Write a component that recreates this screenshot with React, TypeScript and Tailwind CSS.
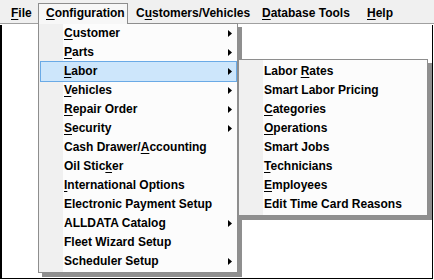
type MenuItem = { label: string; u?: number; sub?: boolean; active?: boolean }

const configItems: MenuItem[] = [
  { label: "Customer", u: 0, sub: true },
  { label: "Parts", u: 0, sub: true },
  { label: "Labor", u: 0, sub: true, active: true },
  { label: "Vehicles", u: 0, sub: true },
  { label: "Repair Order", u: 0, sub: true },
  { label: "Security", u: 0, sub: true },
  { label: "Cash Drawer/Accounting", u: 12 },
  { label: "Oil Sticker", u: 8 },
  { label: "International Options", u: 0 },
  { label: "Electronic Payment Setup" },
  { label: "ALLDATA Catalog", sub: true },
  { label: "Fleet Wizard Setup" },
  { label: "Scheduler Setup", sub: true },
]

const laborItems: MenuItem[] = [
  { label: "Labor Rates", u: 6 },
  { label: "Smart Labor Pricing" },
  { label: "Categories", u: 0 },
  { label: "Operations", u: 0 },
  { label: "Smart Jobs" },
  { label: "Technicians", u: 0 },
  { label: "Employees", u: 0 },
  { label: "Edit Time Card Reasons" },
]

function Mnemonic({ text, u }: { text: string; u?: number }) {
  if (u === undefined) return <>{text}</>
  return (
    <>
      {text.slice(0, u)}
      <span className="underline decoration-1 underline-offset-[2px]">{text[u]}</span>
      {text.slice(u + 1)}
    </>
  )
}

function Arrow() {
  return (
    <svg width="4" height="7" viewBox="0 0 4 7" className="shrink-0">
      <path d="M0 0L4 3.5L0 7Z" fill="#000" />
    </svg>
  )
}

function Row({ item }: { item: MenuItem }) {
  if (item.active) {
    return (
      <div className="-my-px ml-[1px] flex h-[21px] items-center justify-between border border-[#6aaae6] bg-[#cde6fb] pl-[23px] pr-[4px] leading-[19px]">
        <span className="whitespace-nowrap">
          <Mnemonic text={item.label} u={item.u} />
        </span>
        {item.sub ? <Arrow /> : null}
      </div>
    )
  }
  return (
    <div className="flex h-[19px] items-center justify-between pl-[25px] pr-[5px] leading-[19px]">
      <span className="whitespace-nowrap">
        <Mnemonic text={item.label} u={item.u} />
      </span>
      {item.sub ? <Arrow /> : null}
    </div>
  )
}

export default function App() {
  return (
    <div className="relative h-[280px] w-[434px] overflow-hidden bg-white font-['Liberation_Sans',Arial,sans-serif] text-[12px] font-bold text-black">
      {/* menu bar */}
      <div className="flex h-[24px] items-start border-b border-[#a0a0a0] bg-[#f0f0f0]">
        <div className="mt-[3px] w-[38px] pl-[11px] leading-[20px]">
          <Mnemonic text="File" u={0} />
        </div>
        <div className="relative z-20 mt-[3px] h-[21px] w-[90px] border-x border-t border-[#8e8e8e] bg-[#f7f7f7] pl-[7px] leading-[18px]">
          <Mnemonic text="Configuration" u={0} />
        </div>
        <div className="mt-[3px] w-[126px] whitespace-nowrap pl-[8px] leading-[20px]">
          <Mnemonic text="Customers/Vehicles" u={1} />
        </div>
        <div className="mt-[3px] w-[105px] whitespace-nowrap pl-[8px] leading-[20px]">
          <Mnemonic text="Database Tools" u={0} />
        </div>
        <div className="mt-[3px] pl-[8px] leading-[20px]">
          <Mnemonic text="Help" u={0} />
        </div>
      </div>

      {/* window body */}
      <div className="mb-[1px] mr-[1px] mt-[1px] h-[254px] border-b border-l-2 border-r border-black bg-white" />

      {/* Configuration dropdown */}
      <div className="absolute left-[38px] top-[23px] z-10 w-[200px] border border-[#8e8e8e] bg-[linear-gradient(to_right,#f0f0f0_24px,#fcfcfc_24px)] pb-[1px] shadow-[4px_4px_0_#8f8f8f]">
        {configItems.map((it) => (
          <Row key={it.label} item={it} />
        ))}
      </div>

      {/* Labor submenu */}
      <div className="absolute left-[238px] top-[59px] z-10 w-[190px] border border-[#8e8e8e] bg-[linear-gradient(to_right,#f0f0f0_24px,#fcfcfc_24px)] pb-[1px] pt-[2px] shadow-[4px_4px_0_#8f8f8f]">
        {laborItems.map((it) => (
          <Row key={it.label} item={it} />
        ))}
      </div>
    </div>
  )
}
